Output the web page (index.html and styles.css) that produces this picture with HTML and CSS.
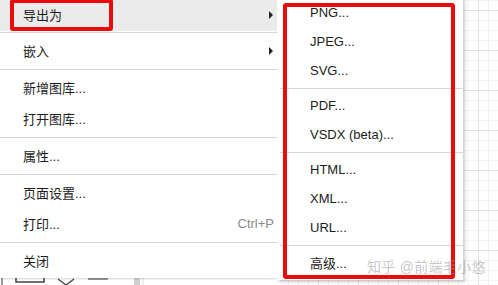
FILE: index.html
```html
<!DOCTYPE html>
<html lang="zh-CN">
<head>
  <meta charset="UTF-8" />
  <title>导出为</title>
  <link rel="stylesheet" href="styles.css">
</head>
<body>

<div class="canvas">

  <div class="toolbar">
    <svg width="280" height="8" viewBox="0 0 280 8">
      <path d="M2 0 V8" stroke="#555" stroke-width="1.2" fill="none"/>
      <path d="M16 1 V5 H44 V1" stroke="#444" stroke-width="1.5" fill="none"/>
      <path d="M58 2 L66 8 L74 2" stroke="#444" stroke-width="1.3" fill="none"/>
      <path d="M88 2 H108" stroke="#555" stroke-width="1.2" fill="none"/>
      <rect x="134" y="1" width="6" height="7" fill="#cfcfcf"/>
      <path d="M143 0 V8" stroke="#ddd" stroke-width="1" fill="none"/>
    </svg>
  </div>

  <div class="menu main">
    <div class="item active">导出为<span class="arrow"></span></div>
    <div class="sep"></div>
    <div class="item">嵌入<span class="arrow"></span></div>
    <div class="sep"></div>
    <div class="item">新增图库...</div>
    <div class="item">打开图库...</div>
    <div class="sep"></div>
    <div class="item">属性...</div>
    <div class="sep"></div>
    <div class="item">页面设置...</div>
    <div class="item">打印...<span class="shortcut">Ctrl+P</span></div>
    <div class="sep"></div>
    <div class="item">关闭</div>
  </div>

  <div class="menu sub">
    <div class="item">PNG...</div>
    <div class="item">JPEG...</div>
    <div class="item">SVG...</div>
    <div class="sep"></div>
    <div class="item">PDF...</div>
    <div class="item">VSDX (beta)...</div>
    <div class="sep"></div>
    <div class="item">HTML...</div>
    <div class="item">XML...</div>
    <div class="item">URL...</div>
    <div class="sep"></div>
    <div class="item">高级...</div>
  </div>

  <div class="mark mark-export"></div>
  <div class="mark mark-sub"></div>

  <div class="watermark">知乎 @前端毛小悠</div>
</div>

</body>
</html>
```

FILE: styles.css
```css
body {
  margin: 0;
  font-family: "Liberation Sans", "Noto Sans CJK SC", sans-serif;
  font-size: 13px;
  color: #1c1c1c;
  overflow: hidden;
}
.canvas {
  position: relative;
  width: 498px;
  height: 285px;
  background-color: #fff;
  background-image:
    linear-gradient(to right, #e2e2e2 1px, transparent 1px),
    linear-gradient(to bottom, #e2e2e2 1px, transparent 1px),
    linear-gradient(to right, #f3f3f3 1px, transparent 1px),
    linear-gradient(to bottom, #f3f3f3 1px, transparent 1px);
  background-size: 40px 40px, 40px 40px, 10px 10px, 10px 10px;
  background-position: 38px 10px, 38px 10px, 8px 0, 8px 0;
  overflow: hidden;
}
.toolbar {
  position: absolute;
  left: 0;
  top: 277px;
  width: 280px;
  height: 8px;
  background: #fff;
}
.toolbar svg {
  display: block;
}
.menu {
  position: absolute;
  background: #fff;
}
.main {
  left: 0;
  top: -2px;
  width: 277px;
  padding-bottom: 2px;
  box-shadow: 1px 1px 2px rgba(0, 0, 0, 0.18);
}
.sub {
  left: 277px;
  top: -2px;
  width: 186px;
  padding-bottom: 3px;
  box-shadow: 2px 2px 3px rgba(0, 0, 0, 0.2);
}
.item {
  position: relative;
  display: flex;
  align-items: center;
  height: 31px;
  padding-left: 23px;
  white-space: nowrap;
}
.sub .item {
  height: 29px;
  padding-left: 33px;
}
.item.active {
  background: #ebebeb;
  height: 33px;
  margin-bottom: -2px;
}
.sep {
  height: 1px;
  margin: 3px 0 2px;
  background: #d6d6d6;
}
.sub .sep {
  margin-left: 3px;
}
.arrow {
  position: absolute;
  right: 4px;
  top: 50%;
  margin-top: -4px;
  width: 0;
  height: 0;
  border-top: 4px solid transparent;
  border-bottom: 4px solid transparent;
  border-left: 4px solid #222;
}
.shortcut {
  position: absolute;
  right: 3px;
  color: #8a8a8a;
}
.mark {
  position: absolute;
  border: 4px solid #ec0a0a;
  border-radius: 3px;
}
.mark-export {
  left: 10px;
  top: -1px;
  width: 95px;
  height: 24px;
}
.mark-sub {
  left: 283px;
  top: 3px;
  width: 164px;
  height: 268px;
}
.watermark {
  position: absolute;
  left: 367px;
  top: 256px;
  font-size: 14px;
  letter-spacing: 0.3px;
  color: rgba(150, 150, 150, 0.55);
  white-space: nowrap;
}
```
